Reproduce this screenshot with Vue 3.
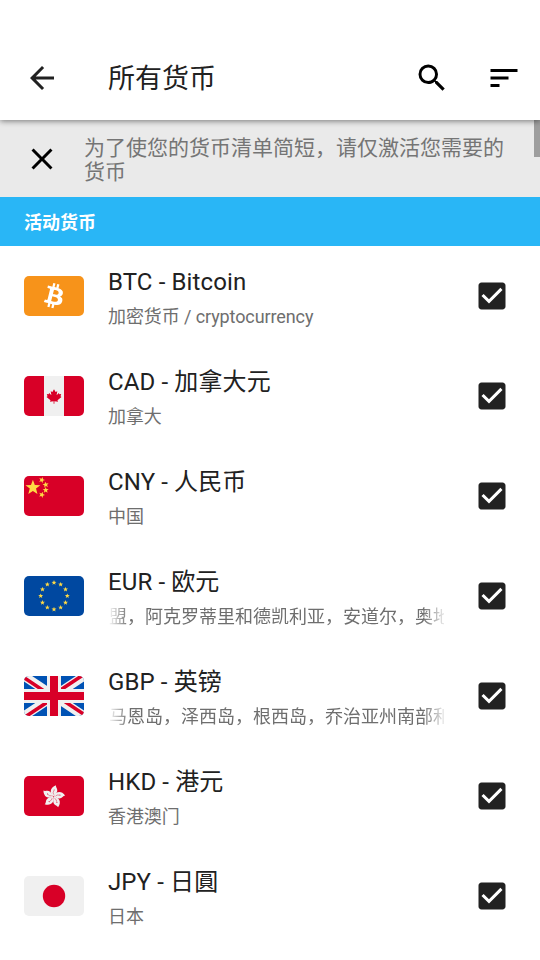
<script setup>
const star = (cx, cy, r, turn = 0) =>
  Array.from({ length: 10 }, (_, i) => {
    const a = ((i * 36 - 90 + turn) * Math.PI) / 180
    const d = i % 2 ? r * 0.42 : r
    return `${(cx + d * Math.cos(a)).toFixed(2)},${(cy + d * Math.sin(a)).toFixed(2)}`
  }).join(' ')

const cnStars = [
  star(8.9, 11.6, 7.8),
  star(17.8, 4, 3.2, 20),
  star(21.7, 8.8, 3.2, -10),
  star(21.7, 14.2, 3.2, 0),
  star(17.8, 18.8, 3.2, 20),
]

const euStars = Array.from({ length: 12 }, (_, i) => {
  const a = (i * Math.PI) / 6
  return star(30 + 13.3 * Math.sin(a), 20 - 13.3 * Math.cos(a), 2.6)
})

const currencies = [
  { code: 'BTC', name: 'Bitcoin', places: '加密货币 / cryptocurrency' },
  { code: 'CAD', name: '加拿大元', places: '加拿大' },
  { code: 'CNY', name: '人民币', places: '中国' },
  { code: 'EUR', name: '欧元', places: '盟，阿克罗蒂里和德凯利亚，安道尔，奥地', scrolling: true },
  { code: 'GBP', name: '英镑', places: '马恩岛，泽西岛，根西岛，乔治亚州南部和', scrolling: true },
  { code: 'HKD', name: '港元', places: '香港澳门' },
  { code: 'JPY', name: '日圓', places: '日本' },
]
</script>

<template>
  <div class="screen">
    <header class="toolbar">
      <svg class="icon back" viewBox="0 0 24 24"><path d="M20 11H7.83l5.59-5.59L12 4l-8 8 8 8 1.41-1.41L7.83 13H20v-2z" /></svg>
      <h1>所有货币</h1>
      <svg class="icon" viewBox="0 0 24 24"><path d="M15.5 14h-.79l-.28-.27A6.47 6.47 0 0 0 16 9.5 6.5 6.5 0 1 0 9.5 16c1.61 0 3.09-.59 4.23-1.57l.27.28v.79l5 4.99L20.49 19l-4.99-5zm-6 0C7.01 14 5 11.99 5 9.5S7.01 5 9.5 5 14 7.01 14 9.5 11.99 14 9.5 14z" /></svg>
      <svg class="icon" viewBox="0 0 24 24"><path d="M3 18h6v-2H3v2zM3 6v2h18V6H3zm0 7h12v-2H3v2z" /></svg>
    </header>

    <main class="content">
      <section class="notice">
        <svg class="icon" viewBox="0 0 24 24"><path d="M19 6.41L17.59 5 12 10.59 6.41 5 5 6.41 10.59 12 5 17.59 6.41 19 12 13.41 17.59 19 19 17.59 13.41 12z" /></svg>
        <p>为了使您的货币清单简短，请仅激活您需要的货币</p>
      </section>
      <h2>活动货币</h2>
      <ul>
        <li v-for="c in currencies" :key="c.code">
          <svg class="flag" viewBox="0 0 60 40">
            <template v-if="c.code === 'BTC'">
              <rect width="60" height="40" fill="#f7931a" />
              <path transform="translate(10.2 .1) scale(1.66)" fill="#fff" d="M17.288 10.291c.24-1.59-.974-2.45-2.64-3.03l.54-2.153-1.315-.33-.525 2.107c-.345-.087-.705-.167-1.064-.25l.526-2.127-1.32-.33-.54 2.165c-.285-.067-.565-.132-.84-.2l-1.815-.45-.35 1.407s.975.225.955.236c.535.136.63.486.615.766l-1.477 5.92c-.075.166-.24.406-.614.314.015.02-.96-.24-.96-.24l-.66 1.51 1.71.426.93.242-.54 2.19 1.32.327.54-2.17c.36.1.705.19 1.05.273l-.51 2.154 1.32.33.545-2.19c2.24.427 3.93.257 4.64-1.774.57-1.637-.03-2.58-1.217-3.196.854-.193 1.5-.76 1.68-1.93h.01zm-3.01 4.22c-.404 1.64-3.157.75-4.05.53l.72-2.9c.896.23 3.757.67 3.33 2.37zm.41-4.24c-.37 1.49-2.662.735-3.405.55l.654-2.64c.744.18 3.137.524 2.75 2.084z" />
            </template>
            <template v-else-if="c.code === 'CAD'">
              <rect width="60" height="40" fill="#d80027" />
              <rect x="20" width="20" height="40" fill="#f0f0f0" />
              <path fill="#d80027" d="M30 13.2l1.6 2.8 1.7-.8-.7 4 2.2-2.2.6 1.3 1.8-.3-.7 2.3 1 .6-4 3.3.5 1.5-3.6-.5v2.6h-.8v-2.6l-3.6.5.5-1.5-4-3.3 1-.6-.7-2.3 1.8.3.6-1.3 2.2 2.2-.7-4 1.7.8z" />
            </template>
            <template v-else-if="c.code === 'CNY'">
              <rect width="60" height="40" fill="#d80027" />
              <polygon v-for="s in cnStars" :key="s" :points="s" fill="#ffda44" />
            </template>
            <template v-else-if="c.code === 'EUR'">
              <rect width="60" height="40" fill="#0048a0" />
              <polygon v-for="s in euStars" :key="s" :points="s" fill="#ffda44" />
            </template>
            <template v-else-if="c.code === 'GBP'">
              <rect width="60" height="40" fill="#0052b4" />
              <path d="M0 0l60 40M60 0L0 40" stroke="#f0f0f0" stroke-width="9" />
              <path d="M-1 1L29 21M31 19L61 39M59-1L29 19M31 21L1 41" stroke="#d80027" stroke-width="3.6" />
              <path d="M30 0v40M0 20h60" stroke="#f0f0f0" stroke-width="14" />
              <path d="M30 0v40M0 20h60" stroke="#d80027" stroke-width="8" />
            </template>
            <template v-else-if="c.code === 'HKD'">
              <rect width="60" height="40" fill="#d80027" />
              <g v-for="n in 5" :key="n" :transform="`translate(29.5 20.6) rotate(${n * 72 + 6})`">
                <path fill="#f0f0f0" d="M0-.3C-4.4-2.6-4.8-9 1.4-11.6 .9-9.4 3.9-8.2 3-5 2.4-2.9 .8-1.8 0-.3z" />
                <path d="M0-2Q-1.4-3.8-.3-5.8" fill="none" stroke="#d80027" stroke-width=".4" />
                <circle cx="-.1" cy="-6.6" r=".55" fill="#d80027" />
              </g>
            </template>
            <template v-else>
              <rect width="60" height="40" fill="#f0f0f0" />
              <circle cx="30" cy="20" r="11.2" fill="#d80027" />
            </template>
          </svg>
          <div class="label">
            <div class="name">{{ c.code }} - {{ c.name }}</div>
            <div class="places" :class="{ scrolling: c.scrolling }">{{ c.places }}</div>
          </div>
          <svg class="icon check" viewBox="0 0 24 24"><path d="M19 3H5c-1.11 0-2 .9-2 2v14c0 1.1.89 2 2 2h14c1.11 0 2-.9 2-2V5c0-1.1-.89-2-2-2zm-9 14l-5-5 1.41-1.41L10 14.17l7.59-7.59L19 8l-9 9z" /></svg>
        </li>
      </ul>
      <div class="scrollbar"></div>
    </main>
  </div>
</template>

<style>
body {
  margin: 0;
  background: #fff;
}
</style>

<style scoped>
.screen {
  width: 540px;
  height: 960px;
  overflow: hidden;
  display: flex;
  flex-direction: column;
  background: #fff;
  color: #212121;
  font-family: Roboto, "Noto Sans CJK SC", sans-serif;
}
h1, h2, p, ul {
  margin: 0;
  padding: 0;
  font-weight: 400;
}
.icon {
  width: 36px;
  height: 36px;
  flex: none;
  fill: #000;
}
.toolbar {
  position: relative;
  z-index: 1;
  box-sizing: border-box;
  height: 120px;
  flex: none;
  display: flex;
  align-items: center;
  gap: 36px;
  padding: 36px 18px 0 24px;
  background: #fff;
  box-shadow: 0 1px 6px rgba(0, 0, 0, 0.5);
}
.toolbar .back {
  fill: #212121;
}
h1 {
  flex: 1;
  margin-left: 12px;
  padding-top: 2px;
  font-size: 27px;
  line-height: 36px;
}
.content {
  position: relative;
  flex: 1;
  min-height: 0;
}
.notice {
  box-sizing: border-box;
  height: 77px;
  display: flex;
  align-items: center;
  gap: 24px;
  padding: 1px 24px 0;
  background: #eaeaea;
}
.notice p {
  width: 424px;
  flex: none;
  padding-top: 2px;
  color: #757575;
  font-size: 21px;
  line-height: 24.5px;
}
h2 {
  box-sizing: border-box;
  height: 49px;
  padding: 1px 0 0 24px;
  background: #29b6f6;
  color: #fff;
  font-size: 18px;
  font-weight: 600;
  line-height: 49px;
}
ul {
  list-style: none;
}
li {
  box-sizing: border-box;
  height: 100px;
  display: flex;
  align-items: center;
  padding: 0 30px 0 24px;
}
.flag {
  width: 60px;
  height: 40px;
  flex: none;
  border-radius: 5px;
  overflow: hidden;
}
.label {
  width: 336px;
  margin: 0 30px 0 24px;
  padding-top: 2px;
  flex: none;
}
.name {
  font-size: 24px;
  line-height: 36px;
  letter-spacing: 0.12px;
}
.places {
  overflow: hidden;
  white-space: nowrap;
  color: #6e6e6e;
  font-size: 18px;
  line-height: 27px;
  margin-top: 3px;
  letter-spacing: -0.1px;
}
.scrolling {
  text-indent: 1px;
  letter-spacing: 0;
  mask-image: linear-gradient(90deg, transparent, #000 21px, #000 315px, rgba(0, 0, 0, 0.15));
}
.check {
  fill: #212121;
}
.scrollbar {
  position: absolute;
  top: 0;
  right: 0;
  width: 6px;
  height: 37px;
  background: #9e9e9e;
}
</style>
